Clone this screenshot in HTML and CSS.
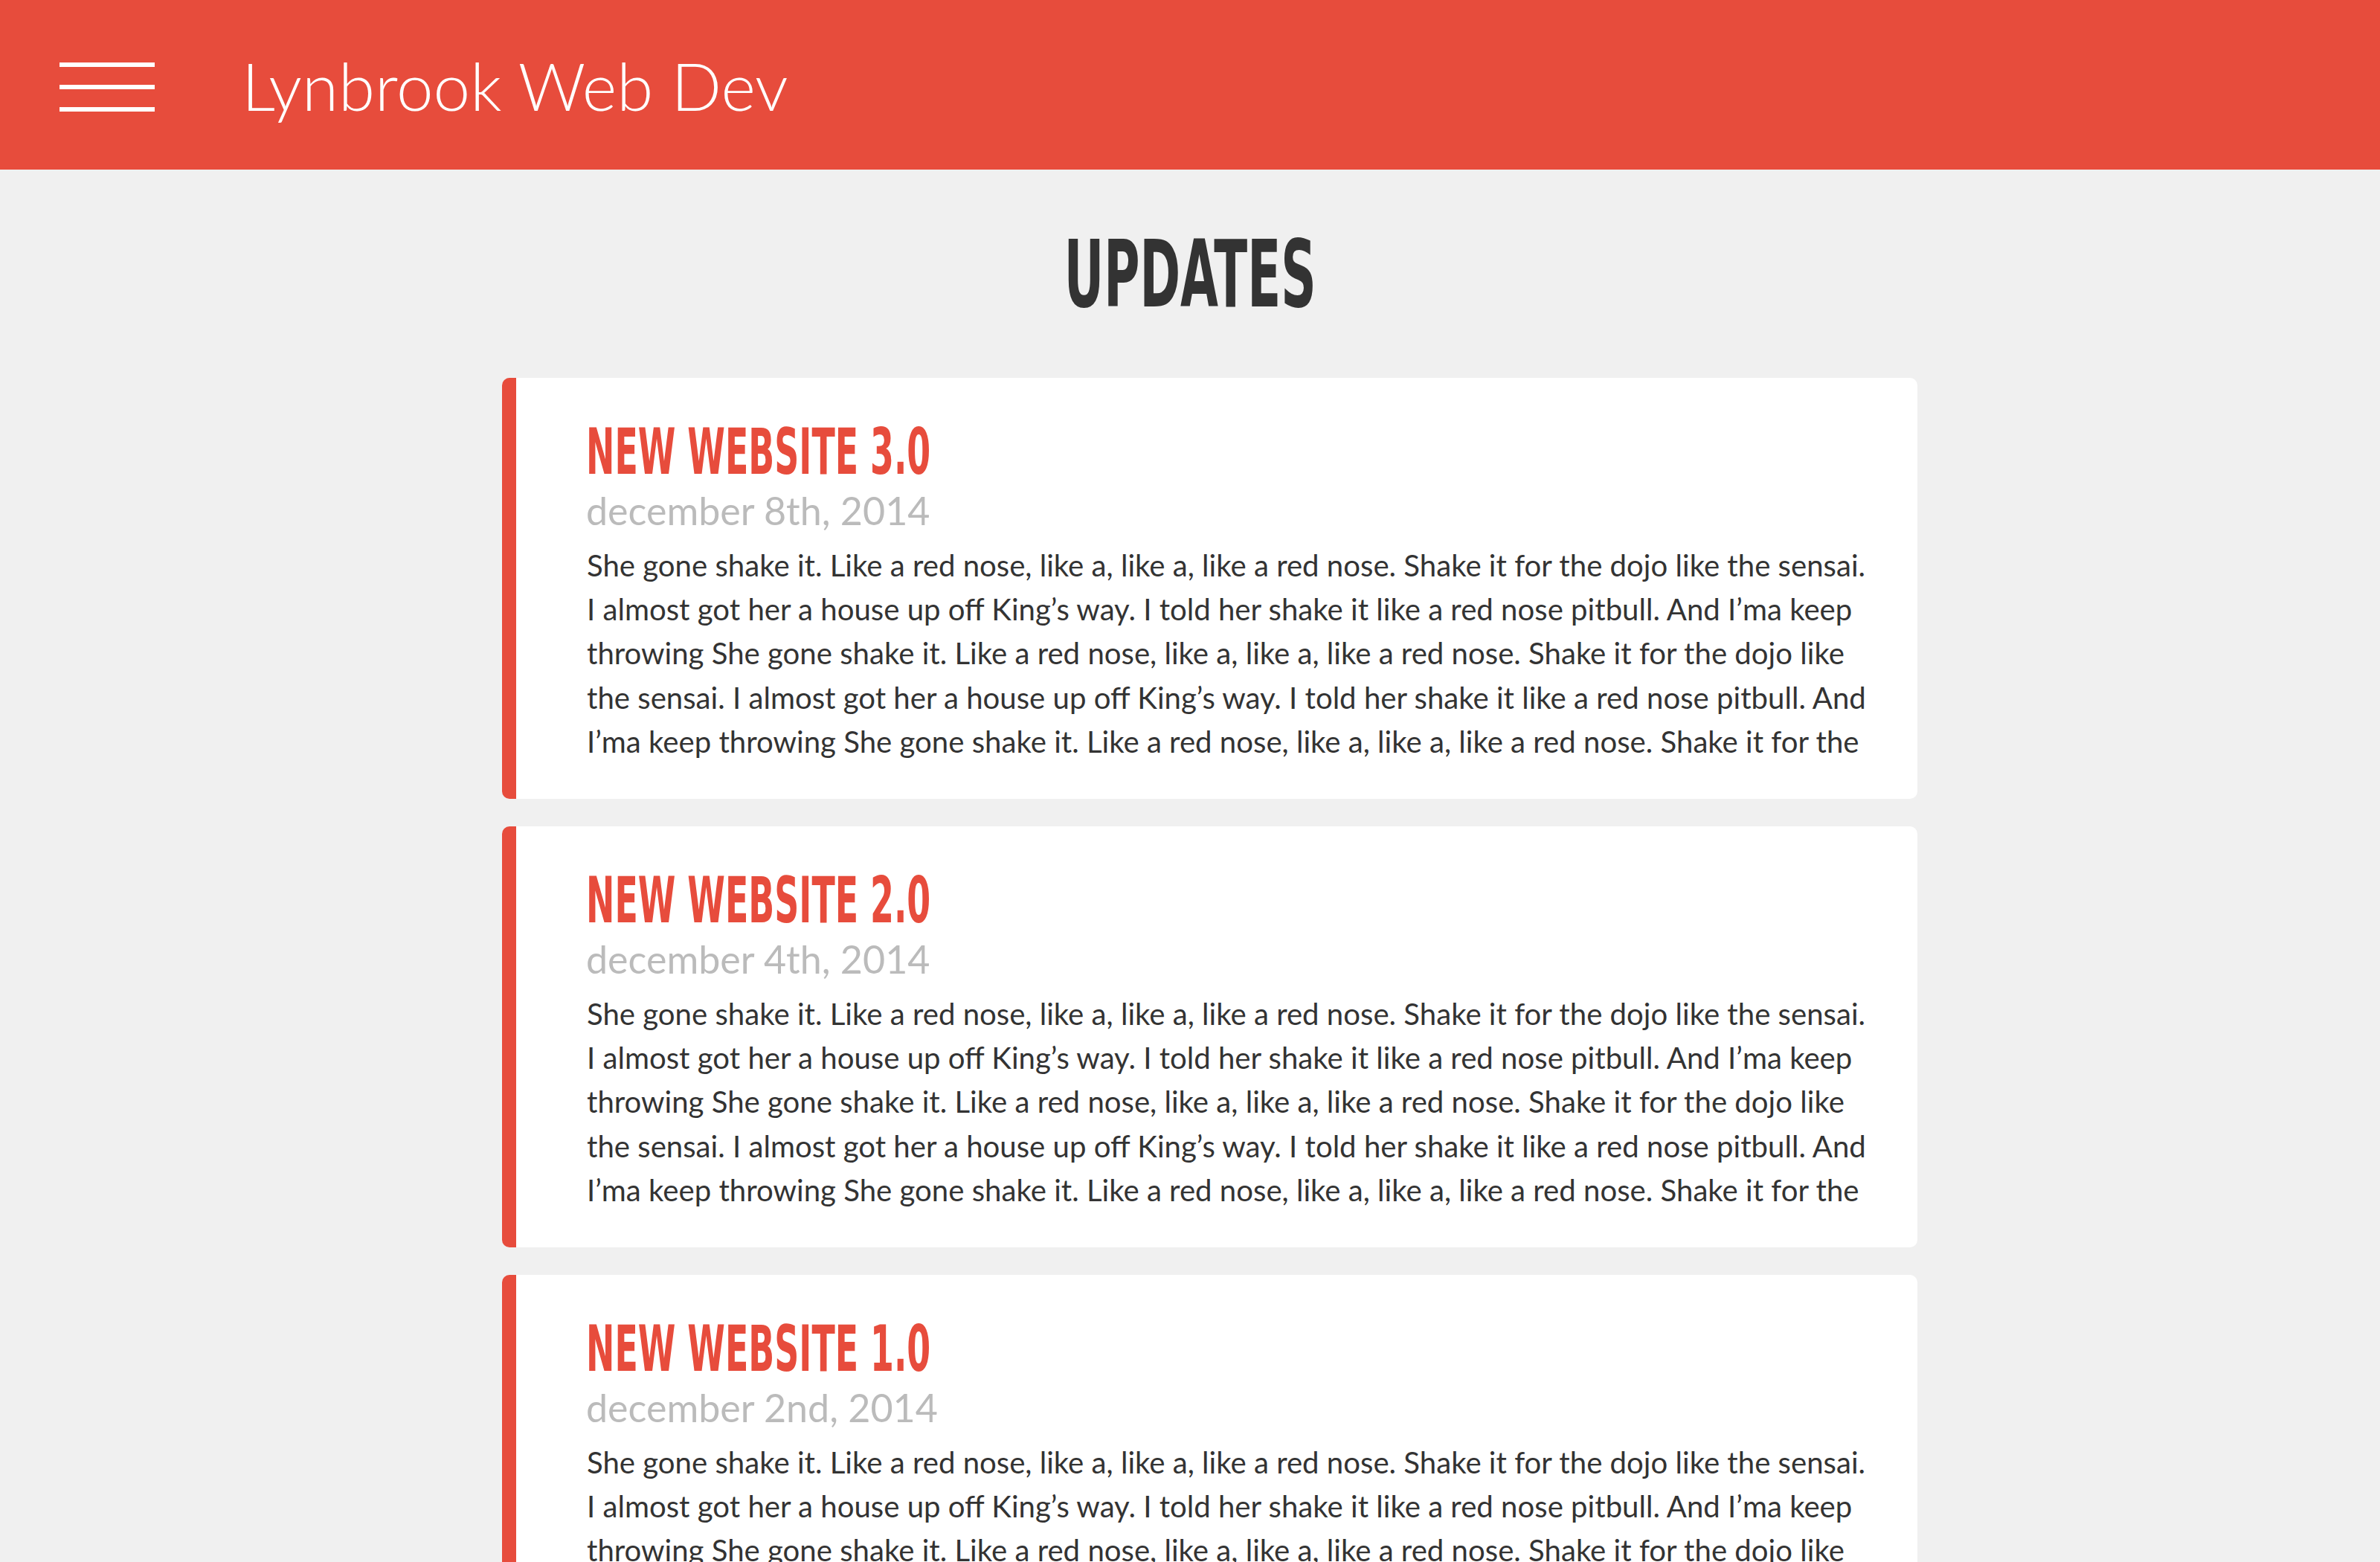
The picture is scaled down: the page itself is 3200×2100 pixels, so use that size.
FILE: index.html
```html
<!DOCTYPE html>
<html lang="en">
<head>
<meta charset="utf-8">
<title>Lynbrook Web Dev - Updates</title>
<link rel="stylesheet" href="styles.css">
</head>
<body>
<header class="topbar">
  <div class="burger" aria-label="Menu">
    <span></span><span></span><span></span>
  </div>
  <div class="brand">Lynbrook Web Dev</div>
</header>
<main class="page">
  <h1 class="page-title"><span>UPDATES</span></h1>
  <section class="updates">
    <article class="card">
      <h2 class="card-title">NEW WEBSITE 3.0</h2>
      <div class="card-date">december 8th, 2014</div>
      <p class="card-text">She gone shake it. Like a red nose, like a, like a, like a red nose. Shake it for the dojo like the sensai. I almost got her a house up off King’s way. I told her shake it like a red nose pitbull. And I’ma keep throwing She gone shake it. Like a red nose, like a, like a, like a red nose. Shake it for the dojo like the sensai. I almost got her a house up off King’s way. I told her shake it like a red nose pitbull. And I’ma keep throwing She gone shake it. Like a red nose, like a, like a, like a red nose. Shake it for the</p>
    </article>
    <article class="card">
      <h2 class="card-title">NEW WEBSITE 2.0</h2>
      <div class="card-date">december 4th, 2014</div>
      <p class="card-text">She gone shake it. Like a red nose, like a, like a, like a red nose. Shake it for the dojo like the sensai. I almost got her a house up off King’s way. I told her shake it like a red nose pitbull. And I’ma keep throwing She gone shake it. Like a red nose, like a, like a, like a red nose. Shake it for the dojo like the sensai. I almost got her a house up off King’s way. I told her shake it like a red nose pitbull. And I’ma keep throwing She gone shake it. Like a red nose, like a, like a, like a red nose. Shake it for the</p>
    </article>
    <article class="card">
      <h2 class="card-title">NEW WEBSITE 1.0</h2>
      <div class="card-date">december 2nd, 2014</div>
      <p class="card-text">She gone shake it. Like a red nose, like a, like a, like a red nose. Shake it for the dojo like the sensai. I almost got her a house up off King’s way. I told her shake it like a red nose pitbull. And I’ma keep throwing She gone shake it. Like a red nose, like a, like a, like a red nose. Shake it for the dojo like the sensai. I almost got her a house up off King’s way. I told her shake it like a red nose pitbull. And I’ma keep throwing She gone shake it. Like a red nose, like a, like a, like a red nose. Shake it for the</p>
    </article>
  </section>
</main>
</body>
</html>
```
FILE: styles.css
```css
html, body {
  margin: 0;
  padding: 0;
}
body {
  background: #f0f0f0;
  font-family: Lato, "Open Sans", sans-serif;
  color: #333;
}
.topbar {
  display: flex;
  align-items: flex-start;
  height: 228px;
  background: #e74c3c;
  padding-left: 80px;
  box-sizing: border-box;
}
.burger {
  display: flex;
  flex-direction: column;
  gap: 24px;
  width: 128px;
  margin-top: 84px;
}
.burger span {
  display: block;
  height: 6px;
  background: #fff;
}
.brand {
  margin-top: 70px;
  margin-left: 117px;
  font-family: Lato, sans-serif;
  font-weight: 300;
  font-size: 89px;
  line-height: 1;
  color: #fff;
  white-space: nowrap;
}
.page {
  padding-top: 79px;
}
.page-title {
  margin: 0 0 77px;
  text-align: center;
  font-family: "DejaVu Sans Condensed", "Liberation Sans Narrow", "Liberation Sans", sans-serif;
  font-stretch: condensed;
  font-weight: 700;
  font-size: 124px;
  line-height: 1;
  color: #333;
}
.page-title span {
  display: inline-block;
  transform: scaleX(0.59);
}
.updates {
  display: flex;
  flex-direction: column;
  gap: 37px;
  width: 1903px;
  margin-left: calc(50% - 925px);
}
.card {
  background: #fff;
  border-left: 19px solid #e74c3c;
  border-radius: 10px;
  padding: 57px 60px 48px 94px;
}
.card-title {
  margin: 0 0 10px;
  font-family: "DejaVu Sans Condensed", "Liberation Sans Narrow", "Liberation Sans", sans-serif;
  font-stretch: condensed;
  font-weight: 700;
  font-size: 85px;
  line-height: 1;
  color: #e74c3c;
  transform: scaleX(0.6);
  transform-origin: left center;
  white-space: nowrap;
}
.card-date {
  font-size: 52px;
  line-height: 1;
  color: #bbb;
  margin-bottom: 18px;
}
.card-text {
  margin: 0;
  padding-left: 1px;
  font-size: 40.15px;
  line-height: 59.2px;
  height: 296px;
  color: #333;
}
```
